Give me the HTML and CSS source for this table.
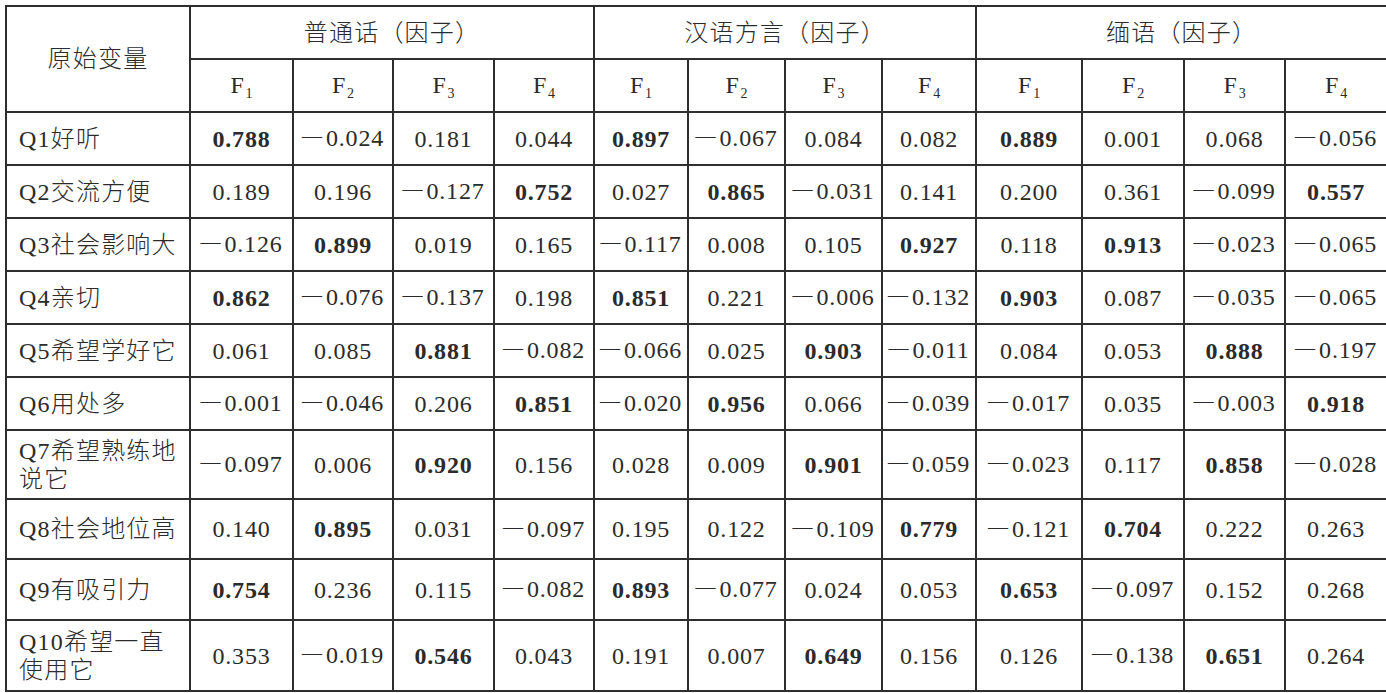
FILE: index.html
```html
<!DOCTYPE html>
<html lang="zh-CN">
<head>
<meta charset="utf-8">
<title>因子分析</title>
<link rel="stylesheet" href="styles.css">
</head>
<body>
<table class="tbl">
  <colgroup>
    <col class="c-label">
    <col class="w103"><col class="w100"><col class="w101"><col class="w100">
    <col class="w94"><col class="w97"><col class="w97"><col class="w94">
    <col class="w106"><col class="w102"><col class="w101"><col class="w102">
  </colgroup>
  <thead>
    <tr class="h53">
      <th rowspan="2" class="cjk">原始变量</th>
      <th colspan="4" class="cjk">普通话（因子）</th>
      <th colspan="4" class="cjk">汉语方言（因子）</th>
      <th colspan="4" class="cjk">缅语（因子）</th>
    </tr>
    <tr class="h53 frow">
      <th>F<sub>1</sub></th><th>F<sub>2</sub></th><th>F<sub>3</sub></th><th>F<sub>4</sub></th>
      <th>F<sub>1</sub></th><th>F<sub>2</sub></th><th>F<sub>3</sub></th><th>F<sub>4</sub></th>
      <th>F<sub>1</sub></th><th>F<sub>2</sub></th><th>F<sub>3</sub></th><th>F<sub>4</sub></th>
    </tr>
  </thead>
  <tbody>
    <tr class="h53">
      <td class="lbl">Q1好听</td>
      <td class="b">0.788</td><td><span class="neg">—</span>0.024</td><td>0.181</td><td>0.044</td>
      <td class="b">0.897</td><td><span class="neg">—</span>0.067</td><td>0.084</td><td>0.082</td>
      <td class="b">0.889</td><td>0.001</td><td>0.068</td><td><span class="neg">—</span>0.056</td>
    </tr>
    <tr class="h53">
      <td class="lbl">Q2交流方便</td>
      <td>0.189</td><td>0.196</td><td><span class="neg">—</span>0.127</td><td class="b">0.752</td>
      <td>0.027</td><td class="b">0.865</td><td><span class="neg">—</span>0.031</td><td>0.141</td>
      <td>0.200</td><td>0.361</td><td><span class="neg">—</span>0.099</td><td class="b">0.557</td>
    </tr>
    <tr class="h53">
      <td class="lbl">Q3社会影响大</td>
      <td><span class="neg">—</span>0.126</td><td class="b">0.899</td><td>0.019</td><td>0.165</td>
      <td><span class="neg">—</span>0.117</td><td>0.008</td><td>0.105</td><td class="b">0.927</td>
      <td>0.118</td><td class="b">0.913</td><td><span class="neg">—</span>0.023</td><td><span class="neg">—</span>0.065</td>
    </tr>
    <tr class="h53">
      <td class="lbl">Q4亲切</td>
      <td class="b">0.862</td><td><span class="neg">—</span>0.076</td><td><span class="neg">—</span>0.137</td><td>0.198</td>
      <td class="b">0.851</td><td>0.221</td><td><span class="neg">—</span>0.006</td><td><span class="neg">—</span>0.132</td>
      <td class="b">0.903</td><td>0.087</td><td><span class="neg">—</span>0.035</td><td><span class="neg">—</span>0.065</td>
    </tr>
    <tr class="h53">
      <td class="lbl">Q5希望学好它</td>
      <td>0.061</td><td>0.085</td><td class="b">0.881</td><td><span class="neg">—</span>0.082</td>
      <td><span class="neg">—</span>0.066</td><td>0.025</td><td class="b">0.903</td><td><span class="neg">—</span>0.011</td>
      <td>0.084</td><td>0.053</td><td class="b">0.888</td><td><span class="neg">—</span>0.197</td>
    </tr>
    <tr class="h53">
      <td class="lbl">Q6用处多</td>
      <td><span class="neg">—</span>0.001</td><td><span class="neg">—</span>0.046</td><td>0.206</td><td class="b">0.851</td>
      <td><span class="neg">—</span>0.020</td><td class="b">0.956</td><td>0.066</td><td><span class="neg">—</span>0.039</td>
      <td><span class="neg">—</span>0.017</td><td>0.035</td><td><span class="neg">—</span>0.003</td><td class="b">0.918</td>
    </tr>
    <tr class="h69">
      <td class="lbl">Q7希望熟练地说它</td>
      <td><span class="neg">—</span>0.097</td><td>0.006</td><td class="b">0.920</td><td>0.156</td>
      <td>0.028</td><td>0.009</td><td class="b">0.901</td><td><span class="neg">—</span>0.059</td>
      <td><span class="neg">—</span>0.023</td><td>0.117</td><td class="b">0.858</td><td><span class="neg">—</span>0.028</td>
    </tr>
    <tr class="h60">
      <td class="lbl">Q8社会地位高</td>
      <td>0.140</td><td class="b">0.895</td><td>0.031</td><td><span class="neg">—</span>0.097</td>
      <td>0.195</td><td>0.122</td><td><span class="neg">—</span>0.109</td><td class="b">0.779</td>
      <td><span class="neg">—</span>0.121</td><td class="b">0.704</td><td>0.222</td><td>0.263</td>
    </tr>
    <tr class="h61">
      <td class="lbl">Q9有吸引力</td>
      <td class="b">0.754</td><td>0.236</td><td>0.115</td><td><span class="neg">—</span>0.082</td>
      <td class="b">0.893</td><td><span class="neg">—</span>0.077</td><td>0.024</td><td>0.053</td>
      <td class="b">0.653</td><td><span class="neg">—</span>0.097</td><td>0.152</td><td>0.268</td>
    </tr>
    <tr class="h71">
      <td class="lbl">Q10希望一直使用它</td>
      <td>0.353</td><td><span class="neg">—</span>0.019</td><td class="b">0.546</td><td>0.043</td>
      <td>0.191</td><td>0.007</td><td class="b">0.649</td><td>0.156</td>
      <td>0.126</td><td><span class="neg">—</span>0.138</td><td class="b">0.651</td><td>0.264</td>
    </tr>
  </tbody>
</table>
</body>
</html>
```
FILE: styles.css
```css
html, body {
  margin: 0;
  padding: 0;
  background: #ffffff;
  overflow: hidden;
}
body {
  padding: 5px 0 0 5px;
  font-family: "Liberation Serif", "Noto Sans CJK SC", serif;
  color: #2b2b2b;
}
.tbl {
  border-collapse: collapse;
  table-layout: fixed;
  width: 1382px;
}
.tbl th, .tbl td {
  border: 2px solid #2e2e2e;
  padding: 0;
  text-align: center;
  vertical-align: middle;
  font-size: 24px;
  font-weight: normal;
  letter-spacing: 0.8px;
  line-height: 28px;
  overflow: hidden;
}
.tbl .cjk {
  font-weight: 300;
  letter-spacing: 1.2px;
}
.c-label { width: 184px; }
.w94 { width: 94px; }
.w97 { width: 97px; }
.w100 { width: 100px; }
.w101 { width: 101px; }
.w102 { width: 102px; }
.w103 { width: 103px; }
.w106 { width: 106px; }
.h53 { height: 53px; }
.h60 { height: 60px; }
.h61 { height: 61px; }
.h69 { height: 69px; }
.h71 { height: 71px; }
.frow th {
  font-size: 24px;
  padding-bottom: 2px;
}
.frow sub {
  font-size: 14px;
  vertical-align: -5px;
  line-height: 0;
  letter-spacing: 0;
  margin-left: 1px;
}
.tbl td.lbl {
  text-align: left;
  padding: 0 10px 0 12px;
  font-weight: 300;
  letter-spacing: 1.2px;
  line-height: 28px;
}
.tbl td.b {
  font-weight: bold;
}
.neg {
  font-size: 20px;
  letter-spacing: 0;
  font-weight: normal;
  margin-right: 4px;
  position: relative;
  top: -3px;
}
```
